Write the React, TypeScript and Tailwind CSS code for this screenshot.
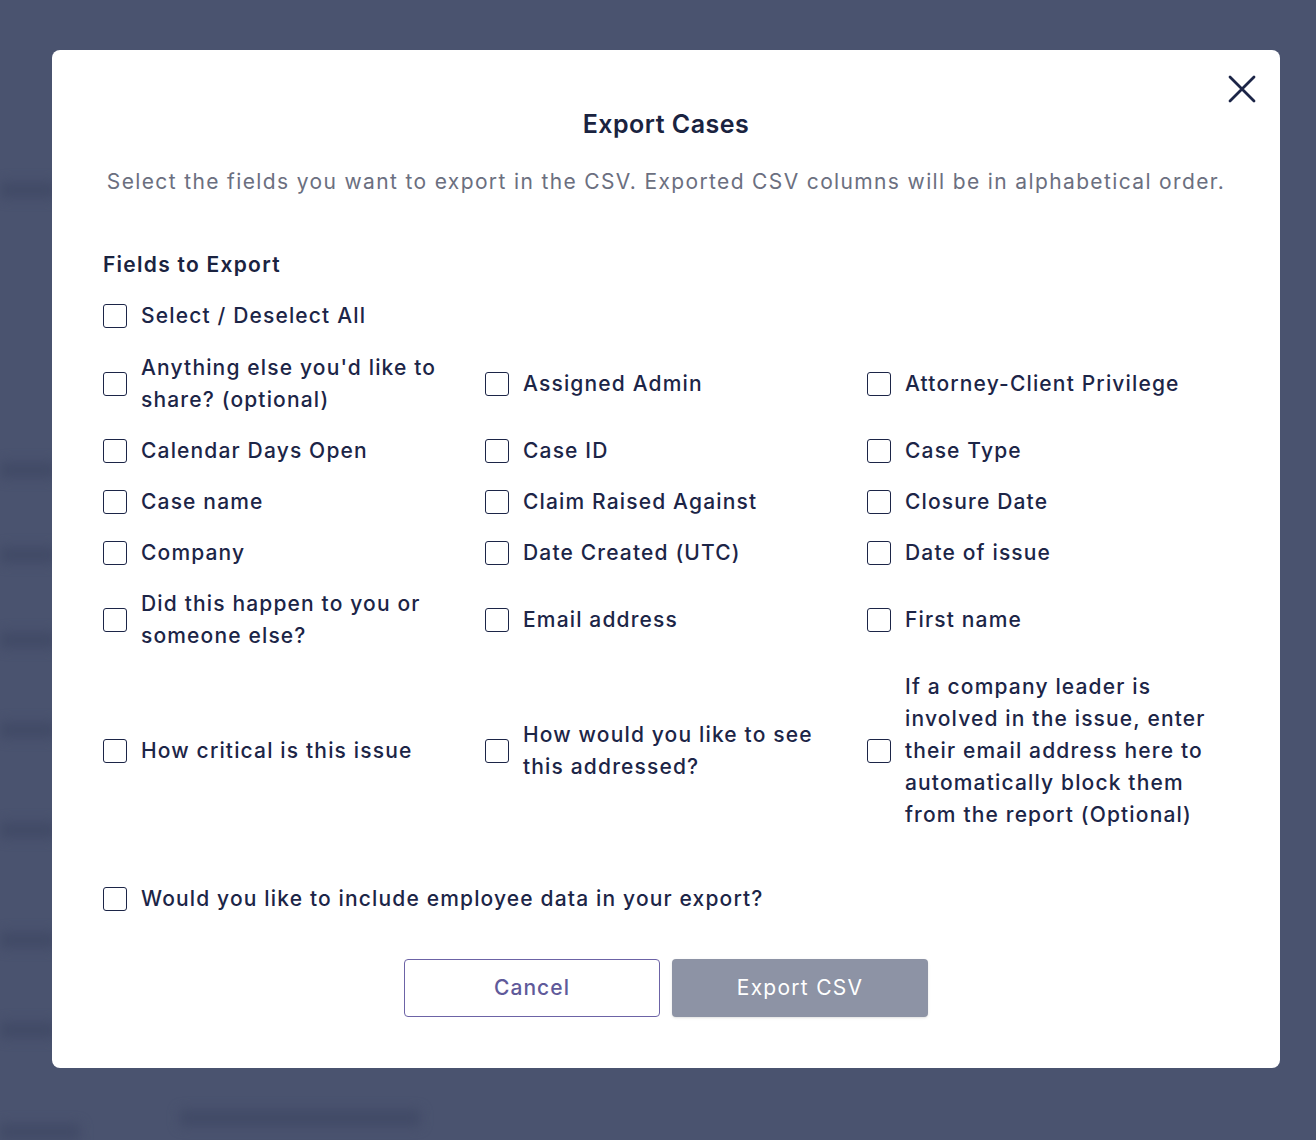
const fields = [
  "Anything else you'd like to share? (optional)",
  'Assigned Admin',
  'Attorney-Client Privilege',
  'Calendar Days Open',
  'Case ID',
  'Case Type',
  'Case name',
  'Claim Raised Against',
  'Closure Date',
  'Company',
  'Date Created (UTC)',
  'Date of issue',
  'Did this happen to you or someone else?',
  'Email address',
  'First name',
  'How critical is this issue',
  'How would you like to see this addressed?',
  'If a company leader is involved in the issue, enter their email address here to automatically block them from the report (Optional)',
]

// blurred rows of the page behind the overlay
const ghostRows = [190, 470, 555, 640, 730, 830, 940, 1030]

function Checkbox({ label }: { label: string }) {
  return (
    <label className="flex items-center gap-[14px] cursor-pointer">
      <span className="w-[24px] h-[24px] shrink-0 rounded-[3px] border-[1.5px] border-[#1c2547] bg-white" />
      <span className="text-[21px] leading-[32px] font-medium tracking-[0.055em] text-[#1c2547]">{label}</span>
    </label>
  )
}

export default function App() {
  return (
    <div
      className="relative w-full h-[1140px] overflow-hidden bg-[#4a536f] pt-[50px] pl-[52px]"
      style={{ fontFamily: 'Inter, "Open Sans", sans-serif' }}
    >
      {/* Blurred page behind */}
      {ghostRows.map((y) => (
        <div
          key={y}
          className="absolute left-0 w-[56px] h-[16px] rounded bg-[#414a66] blur-[6px]"
          style={{ top: y - 8 }}
        />
      ))}
      <div className="absolute top-[1110px] left-[180px] w-[240px] h-[16px] bg-[#414a66] blur-[6px]" />
      <div className="absolute top-[1124px] left-[0px] w-[80px] h-[16px] bg-[#414a66] blur-[6px]" />

      {/* Modal */}
      <div className="relative w-[1228px] h-[1018px] bg-white rounded-[8px] px-[51px] pt-[58px]">
        <button className="absolute top-[25px] right-[24px] text-[#1c2547]">
          <svg width="28" height="28" viewBox="0 0 28 28" fill="none" stroke="currentColor" strokeWidth="2.8" strokeLinecap="round">
            <path d="M2 2L26 26M26 2L2 26" />
          </svg>
        </button>

        <h2 className="text-center text-[25px] leading-[32px] font-semibold tracking-[0.02em] text-[#1a2340]">Export Cases</h2>
        <p className="mt-[28px] text-center text-[21px] leading-[28px] tracking-[0.065em] text-[#6b6f80]">
          Select the fields you want to export in the CSV. Exported CSV columns will be in alphabetical order.
        </p>

        <h3 className="mt-[55px] text-[21px] leading-[28px] font-semibold tracking-[0.06em] text-[#1a2340]">Fields to Export</h3>

        <div className="mt-[21px]">
          <Checkbox label="Select / Deselect All" />
        </div>

        <div className="mt-[20px] grid grid-cols-[382px_382px_1fr] items-center gap-y-[19px]">
          {fields.map((f) => (
            <div key={f} className="pr-[10px]">
              <Checkbox label={f} />
            </div>
          ))}
        </div>

        <div className="mt-[52px]">
          <Checkbox label="Would you like to include employee data in your export?" />
        </div>

        <div className="mt-[44px] flex justify-center gap-[12px]">
          <button className="w-[256px] h-[58px] rounded-[4px] border border-[#6c63a6] bg-white text-[21px] font-medium tracking-[0.05em] text-[#5f5a9a]">
            Cancel
          </button>
          <button className="w-[256px] h-[58px] rounded-[4px] bg-[#8d93a5] text-[21px] tracking-[0.06em] text-white shadow-sm">
            Export CSV
          </button>
        </div>
      </div>
    </div>
  )
}
